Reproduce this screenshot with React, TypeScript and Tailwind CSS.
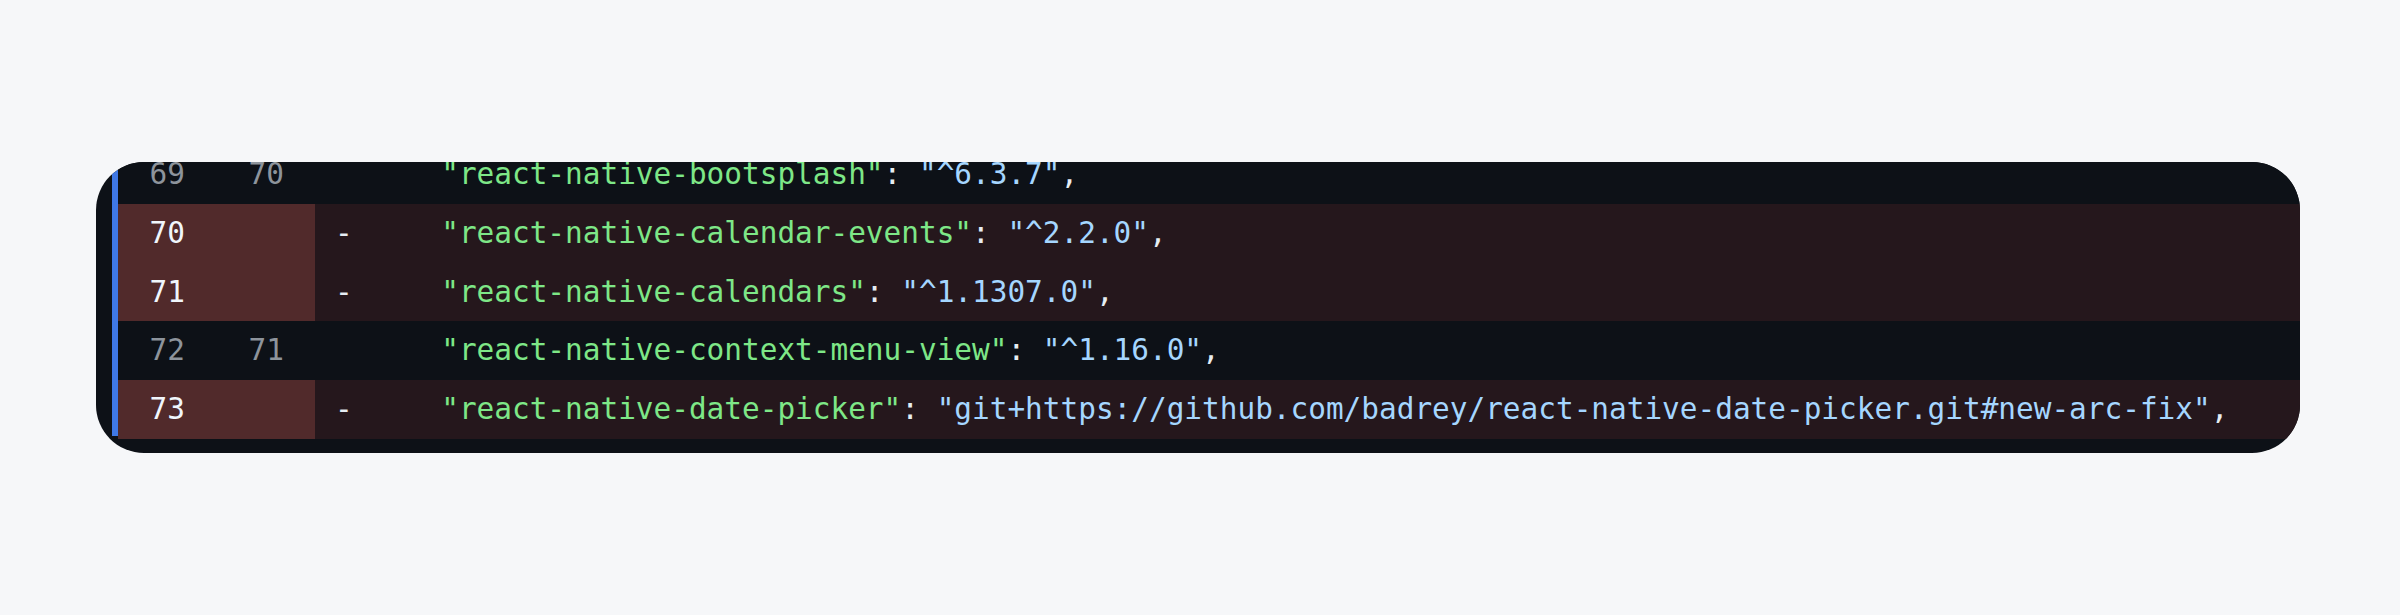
import React from "react";

type Row = {
  kind: "ctx" | "del";
  a: string;
  b: string;
  key: string;
  value: string;
};

const rows: Row[] = [
  { kind: "ctx", a: "69", b: "70", key: "react-native-bootsplash", value: "^6.3.7" },
  { kind: "del", a: "70", b: "", key: "react-native-calendar-events", value: "^2.2.0" },
  { kind: "del", a: "71", b: "", key: "react-native-calendars", value: "^1.1307.0" },
  { kind: "ctx", a: "72", b: "71", key: "react-native-context-menu-view", value: "^1.16.0" },
  {
    kind: "del",
    a: "73",
    b: "",
    key: "react-native-date-picker",
    value: "git+https://github.com/badrey/react-native-date-picker.git#new-arc-fix",
  },
];

function DiffRow({ row }: { row: Row }) {
  const del = row.kind === "del";
  return (
    <div className={`flex h-[58.75px] items-center leading-[58.75px] ${del ? "bg-[#25171c]" : "bg-[#0d1117]"}`}>
      <div
        className={`flex h-full shrink-0 ${del ? "bg-[#512a2b] text-[#f0f6fc]" : "text-[#8d949c]"}`}
      >
        <div className="w-[98px] pr-[31px] text-right">{row.a}</div>
        <div className="w-[99px] pr-[31px] text-right">{row.b}</div>
      </div>
      <div className="whitespace-pre pl-[20px] text-[#e6edf3]">
        <span>{del ? "-" : " "}</span>
        <span>{"     "}</span>
        <span className="text-[#7ee787]">{`"${row.key}"`}</span>
        <span>{": "}</span>
        <span className="text-[#a5d6ff]">{`"${row.value}"`}</span>
        <span>{","}</span>
      </div>
    </div>
  );
}

export default function App() {
  return (
    <div className="min-h-[615px] w-full bg-[#f6f7f9] pt-[162px]">
      <div className="ml-[96px] h-[291px] w-[2204px] overflow-hidden rounded-[48px] bg-[#0d1117] pl-4">
        <div
          className="h-full border-l-[6px] border-[#3f78e6] text-[29.4px]"
          style={{ fontFamily: '"DejaVu Sans Mono", Menlo, monospace' }}
        >
          <div className="-mt-[17px]">
            {rows.map((r, i) => (
              <DiffRow key={i} row={r} />
            ))}
          </div>
        </div>
      </div>
    </div>
  );
}
